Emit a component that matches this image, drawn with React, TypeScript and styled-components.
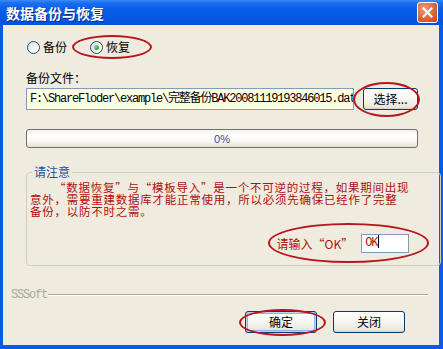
import styled, { createGlobalStyle } from "styled-components";

const GlobalStyle = createGlobalStyle`
  html, body {
    margin: 0;
    padding: 0;
    background: #ffffff;
  }
  * {
    box-sizing: border-box;
  }
`;

const cjk = `"Noto Sans CJK SC", "Liberation Sans", sans-serif`;
const mono = `"Liberation Mono", "Noto Sans CJK SC", monospace`;

const Window = styled.div`
  display: flex;
  flex-direction: column;
  width: 443px;
  height: 349px;
  background: #0a5be4;
  font-family: ${cjk};
  font-size: 12px;
  color: #000000;
`;

const TitleBar = styled.div`
  display: flex;
  align-items: center;
  justify-content: space-between;
  height: 25px;
  padding: 0 5px 0 6px;
  background: linear-gradient(
    #3d8bf5 0%,
    #1a6ef0 12%,
    #0a5fe6 35%,
    #0558e2 70%,
    #0550d8 100%
  );
`;

const Title = styled.h1`
  margin: 0;
  font-size: 14px;
  font-weight: 700;
  line-height: 16px;
  color: #ffffff;
  text-shadow: 1px 1px 0 #0a2a8a;
`;

const CloseButton = styled.button`
  display: flex;
  align-items: center;
  justify-content: center;
  width: 21px;
  height: 21px;
  padding: 0;
  border: 1px solid #ffffff;
  border-radius: 3px;
  background: radial-gradient(circle at 35% 30%, #f09a7c 0%, #e0643c 55%, #c24318 100%);
`;

const Body = styled.div`
  flex: 1;
  display: flex;
  flex-direction: column;
  margin: 0 4px 4px 3px;
  background: #efebde;
`;

const Content = styled.div`
  display: flex;
  flex-direction: column;
  padding: 14px 21px 0 23px;
`;

const RadioRow = styled.div`
  display: flex;
  align-items: center;
  gap: 23px;
  height: 16px;
  padding-left: 1px;
`;

const RadioItem = styled.label`
  display: inline-flex;
  align-items: center;
  gap: 3px;
  line-height: 16px;
`;

const RadioCircle = styled.span<{ $checked?: boolean }>`
  position: relative;
  width: 13px;
  height: 13px;
  border: 1px solid #1c5180;
  border-radius: 50%;
  background: linear-gradient(135deg, #dcdcd6 0%, #ffffff 80%);

  &::after {
    content: "";
    display: ${(p) => (p.$checked ? "block" : "none")};
    position: absolute;
    left: 3px;
    top: 3px;
    width: 5px;
    height: 5px;
    border-radius: 50%;
    background: radial-gradient(circle at 35% 35%, #8ee68a 0%, #21a121 70%, #1a8a1a 100%);
  }
`;

const Highlight = styled.span<{ $inset: string }>`
  position: relative;
  display: inline-flex;
  align-items: center;

  &::after {
    content: "";
    position: absolute;
    inset: ${(p) => p.$inset};
    border: 2px solid #b8161e;
    border-radius: 50%;
    pointer-events: none;
  }
`;

const FieldLabel = styled.div`
  margin-top: 16px;
  line-height: 14px;
`;

const FileRow = styled.div`
  display: flex;
  align-items: center;
  gap: 9px;
  margin-top: 3px;
`;

const PathInput = styled.div`
  width: 328px;
  height: 22px;
  padding: 0 0 0 3px;
  border: 1px solid #7f9db9;
  background: #ffffe6;
  font-family: ${mono};
  font-size: 12px;
  letter-spacing: -1.2px;
  line-height: 20px;
  white-space: nowrap;
  overflow: hidden;
`;

const XpButton = styled.button<{ $width: number; $default?: boolean }>`
  width: ${(p) => p.$width}px;
  height: 22px;
  padding: 0;
  border: 1px solid #003c74;
  border-radius: 3px;
  background: linear-gradient(#ffffff 0%, #f6f5f1 50%, #e8e6dd 90%, #d6d0c5 100%);
  box-shadow: ${(p) =>
    p.$default ? "inset 0 0 0 1px #bcd4f6, inset 0 0 0 2px #8fb3ec" : "none"};
  font-family: ${cjk};
  font-size: 12px;
  line-height: 18px;
  color: #000000;
`;

const Progress = styled.div`
  display: flex;
  align-items: center;
  justify-content: center;
  height: 19px;
  margin-top: 19px;
  border: 1px solid #6f6f6f;
  border-radius: 3px;
  background: linear-gradient(#f4f2ee 0%, #ffffff 35%, #f7f5f0 70%, #e4e0d6 100%);
  font-family: "Liberation Sans", sans-serif;
  font-size: 11px;
  color: #2a4f9c;
`;

const Group = styled.fieldset`
  margin: 17px 0 0;
  padding: 2px 31px 12px 3px;
  border: 1px solid #d0d0bf;
  border-radius: 4px;
`;

const Legend = styled.legend`
  margin-left: 2px;
  padding: 0 2px;
  line-height: 14px;
  color: #1f4e9f;
`;

const Notice = styled.div`
  display: flex;
  flex-direction: column;
  color: #b01010;
  font-size: 11.5px;
  line-height: 12px;
  letter-spacing: 0.75px;
`;

const NoticeLine = styled.span<{ $indent?: boolean }>`
  padding-left: ${(p) => (p.$indent ? "24px" : "0")};
  white-space: nowrap;
`;

const PromptRow = styled.div`
  display: flex;
  justify-content: flex-end;
  margin-top: 17px;
`;

const PromptText = styled.span`
  color: #b01010;
  margin-right: 8px;
`;

const OkInput = styled.div`
  width: 48px;
  height: 19px;
  padding-left: 3px;
  border: 1px solid #7f9db9;
  background: #ffffff;
  font-family: ${mono};
  font-size: 12px;
  letter-spacing: -1.2px;
  line-height: 17px;
  color: #b01010;
`;

const Caret = styled.span`
  display: inline-block;
  width: 1px;
  height: 13px;
  margin-left: 1px;
  vertical-align: -2px;
  background: #000000;
`;

const Footer = styled.div`
  display: flex;
  align-items: center;
  gap: 1px;
  margin-top: 22px;
  padding: 0 11px 0 8px;
`;

const Brand = styled.span`
  font-family: ${mono};
  font-size: 12px;
  letter-spacing: -1.2px;
  line-height: 14px;
  color: #a8a8a0;
`;

const Rule = styled.div`
  flex: 1;
  height: 2px;
  border-top: 1px solid #a8a59a;
  border-bottom: 1px solid #ffffff;
`;

const ButtonRow = styled.div`
  display: flex;
  justify-content: flex-end;
  gap: 16px;
  margin-top: 9px;
  padding-right: 34px;
`;

const App = () => {
  return (
    <>
      <GlobalStyle />
      <Window>
        <TitleBar>
          <Title>数据备份与恢复</Title>
          <CloseButton type="button">
            <svg width="11" height="11" viewBox="0 0 11 11">
              <path d="M1.5 1.5 L9.5 9.5 M9.5 1.5 L1.5 9.5" stroke="#ffffff" strokeWidth="2" strokeLinecap="square" />
            </svg>
          </CloseButton>
        </TitleBar>
        <Body>
          <Content>
            <RadioRow>
              <RadioItem>
                <RadioCircle />
                备份
              </RadioItem>
              <Highlight $inset="-4px -22px -4px -18px">
                <RadioItem>
                  <RadioCircle $checked />
                  恢复
                </RadioItem>
              </Highlight>
            </RadioRow>
            <FieldLabel>备份文件：</FieldLabel>
            <FileRow>
              <PathInput>F:\ShareFloder\example\完整备份BAK20081119193846015.dat</PathInput>
              <Highlight $inset="-6px -2px -7px -10px">
                <XpButton type="button" $width={55}>
                  选择...
                </XpButton>
              </Highlight>
            </FileRow>
            <Progress>0%</Progress>
            <Group>
              <Legend>请注意</Legend>
              <Notice>
                <NoticeLine $indent>“数据恢复”与“模板导入”是一个不可逆的过程，如果期间出现</NoticeLine>
                <NoticeLine>意外，需要重建数据库才能正常使用，所以必须先确保已经作了完整</NoticeLine>
                <NoticeLine>备份，以防不时之需。</NoticeLine>
              </Notice>
              <PromptRow>
                <Highlight $inset="-11px -20px -10px -9px">
                  <PromptText>请输入“OK”</PromptText>
                  <OkInput>
                    OK
                    <Caret />
                  </OkInput>
                </Highlight>
              </PromptRow>
            </Group>
          </Content>
          <Footer>
            <Brand>SSSoft</Brand>
            <Rule />
          </Footer>
          <ButtonRow>
            <Highlight $inset="-2px -9px -3px -6px">
              <XpButton type="button" $width={72} $default>
                确定
              </XpButton>
            </Highlight>
            <XpButton type="button" $width={72}>
              关闭
            </XpButton>
          </ButtonRow>
        </Body>
      </Window>
    </>
  );
};

export default App;
